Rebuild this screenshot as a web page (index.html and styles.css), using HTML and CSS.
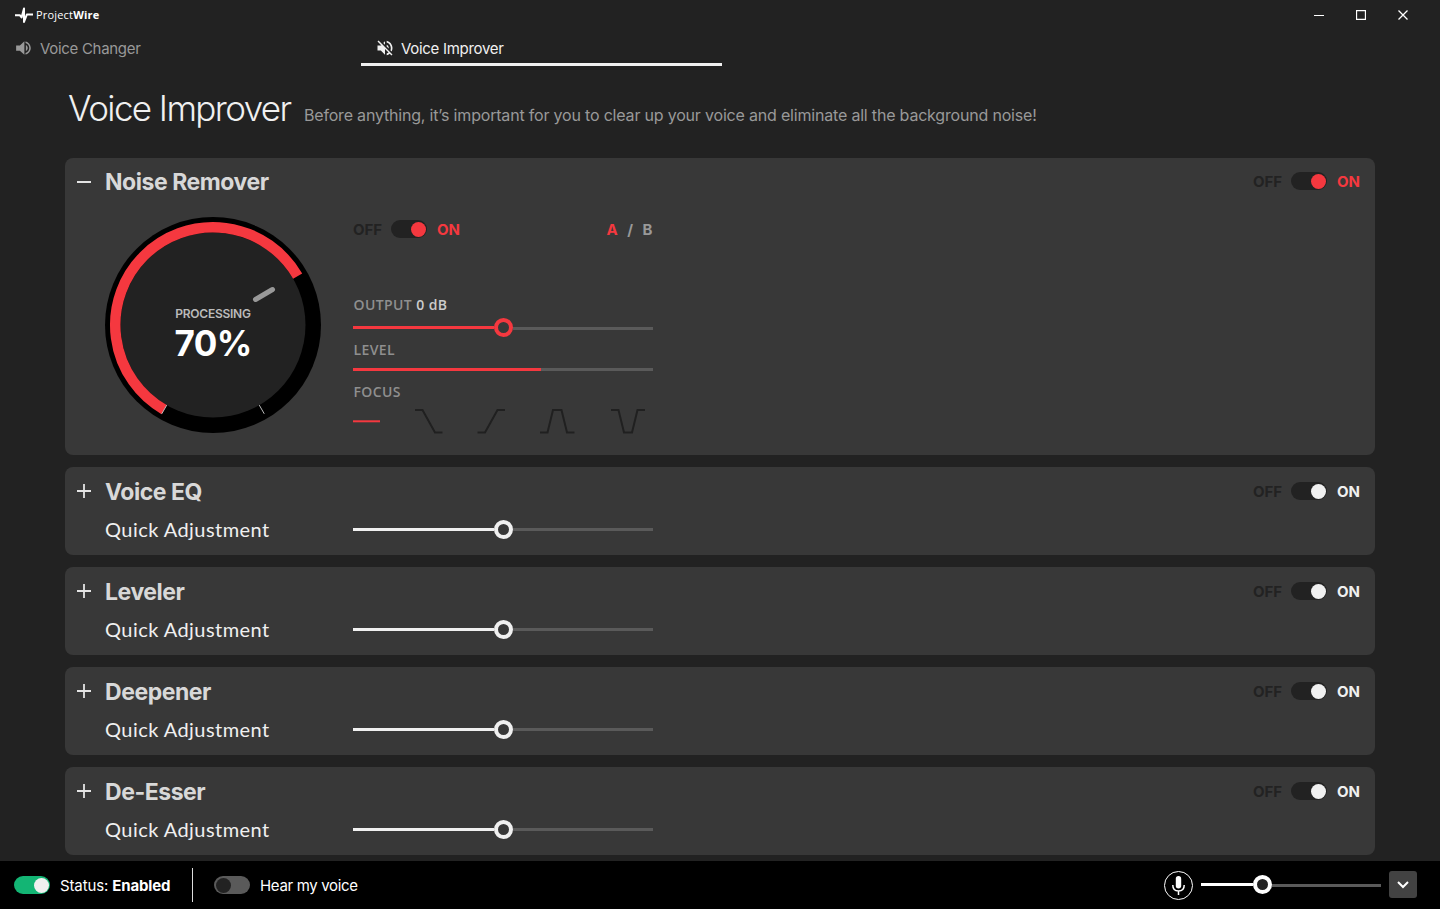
FILE: index.html
```html
<!DOCTYPE html>
<html lang="en">
<head>
<meta charset="utf-8">
<title>ProjectWire</title>
<link rel="stylesheet" href="styles.css">
</head>
<body>
<div class="app">
  <header class="titlebar">
    <div class="brand">
      <svg width="18" height="17" viewBox="0 0 18 17" fill="none" stroke="#fff" stroke-width="2" stroke-linejoin="round"><path d="M0 8.300H5L6.600 10.500L9 1.500V15L11.800 7.600H18"/></svg>
      <span class="brand-name">Project<b>Wire</b></span>
    </div>
    <div class="window-controls">
      <svg width="10" height="10" viewBox="0 0 10 10"><path d="M0 5.500H10" stroke="#fff"/></svg>
      <svg width="10" height="10" viewBox="0 0 10 10"><path d="M.500 .500H9.500V9.500H.500Z" stroke="#fff" stroke-width="1.300" fill="none"/></svg>
      <svg width="10" height="10" viewBox="0 0 10 10"><path d="M.500 .500L9.500 9.500M9.500 .500L.500 9.500" stroke="#fff" stroke-width="1.300"/></svg>
    </div>
  </header>
  <nav class="tabs">
    <a class="tab">
      <svg width="18" height="18" viewBox="0 0 24 24" fill="currentColor"><path d="M1.500 8.500V15.500H6.500L12.500 21V3L6.500 8.500ZM17 12c0-1.770-1.020-3.290-2.500-4.030v8.050c1.480-.730 2.500-2.250 2.500-4.020zM14 3.230v2.060c2.890.860 5 3.540 5 6.710s-2.110 5.850-5 6.710v2.060c4.010-.910 7-4.490 7-8.770s-2.990-7.860-7-8.770z"/></svg>
      <span>Voice Changer</span>
    </a>
    <a class="tab active">
      <svg width="20" height="20" viewBox="0 0 24 24" fill="currentColor"><path d="M16.500 12c0-1.770-1.020-3.290-2.500-4.030v2.210l2.450 2.450c.030-.200.050-.410.050-.630zm2.500 0c0 .940-.200 1.820-.540 2.640l1.510 1.510C20.630 14.910 21 13.500 21 12c0-4.280-2.990-7.860-7-8.770v2.060c2.890.860 5 3.540 5 6.710zM4.270 3L3 4.270 7.730 9H3v6h4l5 5v-6.730l4.250 4.250c-.670.520-1.420.930-2.250 1.180v2.060c1.380-.310 2.630-.950 3.690-1.810L19.730 21 21 19.730l-9-9L4.270 3zM12 4L9.910 6.090 12 8.180V4z"/></svg>
      <span>Voice Improver</span>
    </a>
  </nav>
  <main class="content">
    <div class="heading">
      <h1>Voice Improver</h1>
      <p>Before anything, it’s important for you to clear up your voice and eliminate all the background noise!</p>
    </div>
    <section class="card expanded red">
      <div class="card-head">
        <svg width="14" height="14" viewBox="0 0 14 14"><path d="M0 7H14" stroke="#e4e4e4" stroke-width="2"/></svg>
        <h2>Noise Remover</h2>
        <div class="switch"><span class="off">OFF</span><i class="toggle"></i><span class="on">ON</span></div>
      </div>
      <div class="card-body">
        <div class="dial">
          <svg width="216" height="216" viewBox="0 0 216 216" fill="none">
            <circle cx="108" cy="108" r="108" fill="#000"/>
            <circle cx="108" cy="108" r="92.500" fill="#222"/>
            <path d="M59.120 192.650A97.750 97.750 0 1 1 192.650 59.120" stroke="#f5383f" stroke-width="10.500"/>
            <path d="M61.750 188.100L56.750 196.800M154.250 188.100L159.250 196.800" stroke="#bbb"/>
            <path d="M150.500 82.500L167.500 72.500" stroke="#999" stroke-width="5" stroke-linecap="round"/>
          </svg>
          <div class="dial-text"><span class="processing">PROCESSING</span><strong>70%</strong></div>
        </div>
        <div class="controls">
          <div class="controls-top">
            <div class="switch"><span class="off">OFF</span><i class="toggle"></i><span class="on">ON</span></div>
            <div class="ab"><span class="a">A</span><span>/</span><span>B</span></div>
          </div>
          <div class="label output">OUTPUT <b>0 dB</b></div>
          <div class="slider"><span class="fill"></span><span class="knob"></span><span class="rest"></span></div>
          <div class="label level">LEVEL</div>
          <div class="meter"><span></span></div>
          <div class="label focus">FOCUS</div>
          <div class="shapes">
            <svg width="300" height="28" viewBox="0 0 300 28" fill="none" stroke="#202020" stroke-width="2">
              <path d="M0 14.300H27" stroke="#f5383f"/>
              <path d="M62 3H69.500L82 25.500H89.500"/>
              <path d="M124.500 25.500H132L144.500 3H152"/>
              <path d="M187 25.500H194.500L200 3H208.500L214 25.500H221.500"/>
              <path d="M258 3H265.500L271 25.500H279L284.500 3H292"/>
            </svg>
          </div>
        </div>
      </div>
    </section>
    <section class="card">
      <div class="card-head">
        <svg width="14" height="14" viewBox="0 0 14 14"><path d="M0 7H14M7 0V14" stroke="#e4e4e4" stroke-width="1.800"/></svg>
        <h2>Voice EQ</h2>
        <div class="switch"><span class="off">OFF</span><i class="toggle"></i><span class="on">ON</span></div>
      </div>
      <div class="quick"><span>Quick Adjustment</span><div class="slider"><span class="fill"></span><span class="knob"></span><span class="rest"></span></div></div>
    </section>
    <section class="card">
      <div class="card-head">
        <svg width="14" height="14" viewBox="0 0 14 14"><path d="M0 7H14M7 0V14" stroke="#e4e4e4" stroke-width="1.800"/></svg>
        <h2>Leveler</h2>
        <div class="switch"><span class="off">OFF</span><i class="toggle"></i><span class="on">ON</span></div>
      </div>
      <div class="quick"><span>Quick Adjustment</span><div class="slider"><span class="fill"></span><span class="knob"></span><span class="rest"></span></div></div>
    </section>
    <section class="card">
      <div class="card-head">
        <svg width="14" height="14" viewBox="0 0 14 14"><path d="M0 7H14M7 0V14" stroke="#e4e4e4" stroke-width="1.800"/></svg>
        <h2>Deepener</h2>
        <div class="switch"><span class="off">OFF</span><i class="toggle"></i><span class="on">ON</span></div>
      </div>
      <div class="quick"><span>Quick Adjustment</span><div class="slider"><span class="fill"></span><span class="knob"></span><span class="rest"></span></div></div>
    </section>
    <section class="card">
      <div class="card-head">
        <svg width="14" height="14" viewBox="0 0 14 14"><path d="M0 7H14M7 0V14" stroke="#e4e4e4" stroke-width="1.800"/></svg>
        <h2>De-Esser</h2>
        <div class="switch"><span class="off">OFF</span><i class="toggle"></i><span class="on">ON</span></div>
      </div>
      <div class="quick"><span>Quick Adjustment</span><div class="slider"><span class="fill"></span><span class="knob"></span><span class="rest"></span></div></div>
    </section>
  </main>
  <footer class="statusbar">
    <i class="toggle green"></i>
    <span class="status">Status: <b>Enabled</b></span>
    <span class="divider"></span>
    <i class="toggle gray"></i>
    <span class="hear">Hear my voice</span>
    <svg class="mic" width="30" height="30" viewBox="0 0 30 30" fill="none" stroke="#fff"><circle cx="15.500" cy="15.500" r="14"/><rect x="12.800" y="6" width="5.400" height="12.500" rx="2.700" fill="#fff" stroke="none"/><path d="M9.800 15C9.800 19 12 21 15.500 21S21.200 19 21.200 15M15.500 21V25" stroke-width="1.500"/></svg>
    <div class="slider volume"><span class="fill"></span><span class="knob"></span><span class="rest"></span></div>
    <button class="more"><svg width="12" height="8" viewBox="0 0 12 8" fill="none" stroke="#fff" stroke-width="2"><path d="M1 1L6 6L11 1"/></svg></button>
  </footer>
</div>
</body>
</html>
```
FILE: styles.css
```css
* { box-sizing: border-box; margin: 0; }
body { background: #222; font-family: Inter, "Liberation Sans", sans-serif; color: #f0f0f0; }
svg { display: block; flex: none; }
.app { width: 1440px; height: 909px; display: flex; flex-direction: column; overflow: hidden; }

.titlebar { height: 30px; display: flex; justify-content: space-between; align-items: center; padding: 0 32px 0 15px; }
.brand { display: flex; align-items: center; gap: 3px; }
.brand-name { font: 11px/16px "Open Sans", sans-serif; letter-spacing: 0.18px; color: #fff; }
.window-controls { display: flex; gap: 32px; }

.tabs { display: flex; height: 36px; }
.tab { width: 361px; display: flex; align-items: center; padding: 3px 0 0 15px; gap: 7px; font-size: 15px; line-height: 20px; letter-spacing: -0.3px; color: #999; border-bottom: 3px solid transparent; }
.tab span { padding-top: 1px; }
.tab.active { color: #f0f0f0; border-bottom-color: #f0f0f0; gap: 6px; padding-left: 14px; }

.content { flex: 1; padding: 18px 65px 0; display: flex; flex-direction: column; gap: 12px; min-height: 0; }
.heading { height: 62px; flex: none; display: flex; align-items: baseline; padding-left: 3px; gap: 14px; }
h1 { font-size: 35px; font-weight: 300; line-height: 50px; letter-spacing: -1.6px; white-space: nowrap; width: 222px; margin-top: -1px; }
.heading p { font-size: 16px; letter-spacing: -0.19px; color: #999; white-space: nowrap; }

.card { background: #383838; border-radius: 8px; height: 88px; flex: none; }
.card.expanded { height: 297px; }
.card-head { height: 48px; display: flex; align-items: center; padding: 0 15px 0 12px; }
.card-head h2 { font-size: 23px; font-weight: 700; line-height: 30px; color: #d8d8d8; margin: 1px auto 0 14px; letter-spacing: -0.45px; }
.expanded .card-head h2 { margin-top: 0; }
.expanded .card-head .switch { margin-bottom: 2px; }

.switch { display: flex; align-items: center; font-size: 15px; font-weight: 700; line-height: 20px; }
.off, .on { padding-top: 1px; }
.off { color: #222; width: 38px; }
.on { margin-left: 10px; width: 23px; }
.red .on { color: #f5383f; }
.toggle { display: flex; align-items: center; justify-content: flex-end; flex: none; width: 36px; height: 18px; border-radius: 9px; background: #222; padding: 0 1.5px; }
.toggle::after { content: ""; width: 15px; height: 15px; border-radius: 50%; background: #f0f0f0; }
.red .toggle::after { background: #f5383f; }

.card-body { display: flex; padding: 11px 0 0 40px; gap: 32px; }
.dial { display: grid; width: 216px; height: 216px; }
.dial > * { grid-area: 1 / 1; }
.dial-text { display: flex; flex-direction: column; align-items: center; padding-top: 90px; z-index: 1; }
.processing { font-size: 12px; line-height: 14px; font-weight: 600; letter-spacing: -0.25px; color: #bbb; }
.dial-text strong { font-size: 35px; line-height: 44px; font-weight: 700; letter-spacing: -0.6px; color: #fff; }

.controls { width: 300px; }
.controls-top { display: flex; justify-content: space-between; height: 24px; align-items: center; }
.ab { display: flex; gap: 9.5px; font-size: 15px; font-weight: 700; color: #999; padding-right: 0.5px; }
.a { color: #f5383f; }
.label { font: 600 14px/20px "Open Sans", sans-serif; letter-spacing: 0.4px; color: #8f8f8f; height: 20px; padding-left: 0.5px; }
.label b { font-weight: 600; color: #ccc; }
.output { margin-top: 54px; }
.level { margin-top: 2px; }
.focus { margin-top: 11px; }

.slider { display: flex; align-items: center; width: 300px; height: 20px; }
.fill { width: 141px; height: 3px; background: #f0f0f0; }
.knob { flex: none; width: 19px; height: 19px; border-radius: 50%; border: 4px solid #f0f0f0; }
.rest { flex: 1; height: 3px; background: #5a5a5a; margin-top: 1px; }
.red .fill { background: #f5383f; }
.red .knob { border-color: #f5383f; }
.controls .slider { height: 21px; margin-top: 2px; }
.meter { height: 3px; background: #5a5a5a; margin-top: 8px; }
.meter span { display: block; width: 188px; height: 3px; background: #f5383f; }
.shapes { margin-top: 5px; }

.quick { display: flex; align-items: center; padding-left: 40px; height: 28px; }
.quick > span { width: 248px; font: 400 20px/28px Lato, sans-serif; letter-spacing: 0.45px; }

.statusbar { height: 48px; flex: none; background: #000; display: flex; align-items: center; padding: 0 23px 0 14px; font-size: 15px; color: #fff; }
.green { background: #13b574; }
.gray { background: #5a5a5a; justify-content: flex-start; }
.gray::after { background: #222; }
.status { margin-left: 10px; width: 132px; white-space: nowrap; letter-spacing: -0.13px; }
.divider { width: 1px; height: 34px; background: #ddd; margin-right: 21px; }
.hear { margin-left: 10px; letter-spacing: -0.33px; }
.mic { margin-left: auto; margin-right: 8px; }
.volume { width: 180px; margin-bottom: 1px; }
.volume .fill { width: 52px; background: #fff; }
.volume .knob { border-color: #fff; background: #222; }
.more { width: 28px; height: 27px; border: 0; border-radius: 3px; background: #424242; margin: 0 0 1px 8px; padding: 0; display: grid; place-items: center; }
```
